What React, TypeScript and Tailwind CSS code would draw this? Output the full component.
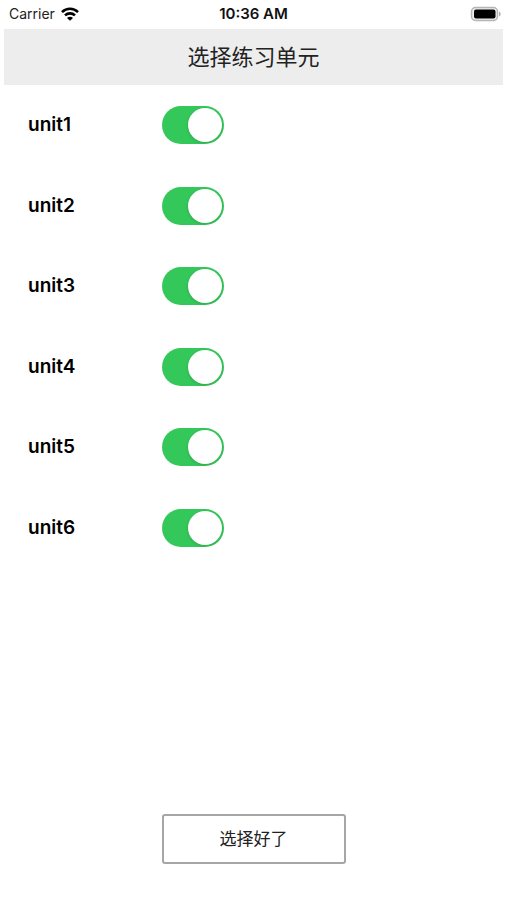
import { useState } from "react";

const units = ["unit1", "unit2", "unit3", "unit4", "unit5", "unit6"];

function WifiIcon() {
  return (
    <svg viewBox="0 0 18 14" className="h-[14px] w-[18px]" aria-hidden="true">
      <g fill="none" stroke="#000" strokeWidth="2.6">
        <path d="M1 5.1C5.5.7 12.5.7 17 5.1" />
        <path d="M4 8.4c2.8-2.7 7.2-2.7 10 0" />
      </g>
      <path d="M9 13.8 6 10.9c1.7-1.6 4.3-1.6 6 0z" fill="#000" />
    </svg>
  );
}

function BatteryIcon() {
  return (
    <svg viewBox="0 0 32 16" className="h-4 w-8" aria-hidden="true">
      <rect x="1.5" y="1.5" width="26" height="13" rx="4" fill="#eee" stroke="#b5b5b5" strokeWidth="1.5" />
      <rect x="4" y="3.5" width="21.5" height="9" rx="2" fill="#000" />
      <path d="M29 5.5c2.4 1 2.4 4 0 5z" fill="#b5b5b5" />
    </svg>
  );
}

function StatusBar() {
  return (
    <div className="grid h-[29px] grid-cols-3 items-center px-[5px] pb-[2px] leading-5">
      <div className="flex items-center gap-[6px] pl-1 text-sm text-[#222]">
        <span>Carrier</span>
        <WifiIcon />
      </div>
      <div className="text-center text-[15px] font-semibold whitespace-nowrap text-[#111]">10:36 AM</div>
      <div className="flex justify-end">
        <BatteryIcon />
      </div>
    </div>
  );
}

function UnitRow({ name }: { name: string }) {
  const [on, setOn] = useState(true);
  return (
    <li className="flex items-center px-7">
      <label htmlFor={name} className="w-[134px] text-[19px] leading-7 font-semibold text-black">
        {name}
      </label>
      <input
        id={name}
        type="checkbox"
        role="switch"
        checked={on}
        onChange={(e) => setOn(e.target.checked)}
        className="flex h-[38px] w-[62px] shrink-0 cursor-pointer appearance-none items-center rounded-full bg-[#e9e9ea] px-[2px] before:size-[34px] before:rounded-full before:bg-white before:shadow-[0_1px_3px_rgba(0,0,0,0.15)] before:content-[''] checked:justify-end checked:bg-[#34c759]"
      />
    </li>
  );
}

export default function App() {
  return (
    <div className="flex min-h-screen flex-col bg-white font-['Inter','Noto_Sans_CJK_SC',sans-serif]">
      <StatusBar />
      <header className="mx-1 flex h-14 items-center justify-center bg-[#ededed]">
        <h1 className="text-[22px] leading-8 text-[#222]">选择练习单元</h1>
      </header>
      <main className="flex grow flex-col">
        <ul className="grid h-[483px] grid-rows-6">
          {units.map((name) => (
            <UnitRow key={name} name={name} />
          ))}
        </ul>
        <button
          type="button"
          className="mx-auto mt-auto mb-9 h-[50px] w-[184px] rounded-[3px] border-2 border-[#a6a6a6] bg-white text-[17px] leading-6 text-[#222]"
        >
          选择好了
        </button>
      </main>
    </div>
  );
}
